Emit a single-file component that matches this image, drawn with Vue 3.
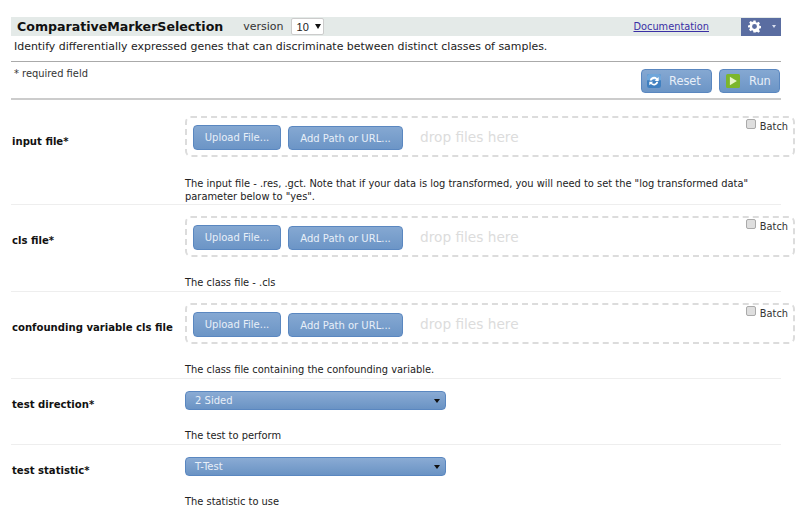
<script setup>
const fileParams = [
  { label: 'input file*', desc: 'The input file - .res, .gct. Note that if your data is log transformed, you will need to set the "log transformed data" parameter below to "yes".', tall: true },
  { label: 'cls file*', desc: 'The class file - .cls' },
  { label: 'confounding variable cls file', desc: 'The class file containing the confounding variable.' }
]
const selectParams = [
  { label: 'test direction*', value: '2 Sided', desc: 'The test to perform' },
  { label: 'test statistic*', value: 'T-Test', desc: 'The statistic to use' }
]
</script>

<template>
  <div class="page">
    <div class="head">
      <header class="titlebar">
        <span class="title">ComparativeMarkerSelection</span>
        <span class="version">version</span>
        <span class="vselect">10<i class="vcaret"></i></span>
        <a class="doc" href="#">Documentation</a>
        <span class="gear">
          <svg width="13" height="13" viewBox="0 0 24 24"><path fill="#fff" fill-rule="evenodd" d="M10 1h4l.6 3.200 2 .8 2.700-1.800 2.800 2.800-1.800 2.700.8 2 3.200.6v4l-3.200.6-.8 2 1.800 2.700-2.800 2.800-2.700-1.800-2 .8L14 23h-4l-.6-3.200-2-.8-2.700 1.800-2.800-2.800 1.800-2.700-.8-2L0 14v-4l3.200-.6.8-2L2.200 4.700 5 1.900l2.700 1.800 2-.8zM12 7.500a4.500 4.500 0 1 0 0 9 4.500 4.500 0 0 0 0-9z"/></svg>
          <i class="gcaret"></i>
        </span>
      </header>
      <p class="summary">Identify differentially expressed genes that can discriminate between distinct classes of samples.</p>
      <div class="actions">
        <span class="req">* required field</span>
        <div class="btns">
          <button class="btn act">
            <svg width="14" height="14" viewBox="0 0 18 18"><rect width="18" height="18" rx="3" fill="#3f7fc0"/><path d="M0 3a3 3 0 0 1 3-3h12a3 3 0 0 1 3 3v5H0z" fill="#6fa6da"/><path d="M3.500 8.500A5.500 5.500 0 0 1 13 5.500L15 4v5h-5l1.700-1.800A3.500 3.500 0 0 0 6 8.500zM14.500 10a5.500 5.500 0 0 1-9.500 3L3 14.500V10h5L6.300 11.700A3.500 3.500 0 0 0 12 10z" fill="#fff"/></svg>
            <span>Reset</span>
          </button>
          <button class="btn act run">
            <svg width="14" height="14" viewBox="0 0 18 18"><rect width="18" height="18" rx="2" fill="#7cb62c"/><path d="M5 3.500 14 9l-9 5.500z" fill="#e8f5c8"/></svg>
            <span>Run</span>
          </button>
        </div>
      </div>
    </div>

    <section v-for="p in fileParams" :key="p.label" class="row" :class="{ tall: p.tall }">
      <label class="lab">{{ p.label }}</label>
      <div class="field">
        <div class="drop">
          <button class="btn up">Upload File...</button>
          <button class="btn add">Add Path or URL...</button>
          <span class="hint">drop files here</span>
          <span class="batch"><i class="check"></i>Batch</span>
        </div>
        <p class="desc">{{ p.desc }}</p>
      </div>
    </section>

    <section v-for="p in selectParams" :key="p.label" class="row sel">
      <label class="lab">{{ p.label }}</label>
      <div class="field">
        <div class="select">{{ p.value }}<i class="scaret"></i></div>
        <p class="desc">{{ p.desc }}</p>
      </div>
    </section>
  </div>
</template>

<style>
html, body { margin: 0; background: #fff; overflow: hidden; }
</style>
<style scoped>
.page {
  width: 800px; height: 508px; padding: 17px 0 0 11px; box-sizing: border-box;
  font-family: "DejaVu Sans", Verdana, sans-serif; font-size: 10px; color: #222; overflow: hidden;
}
.head { width: 770px; }
.titlebar { display: flex; align-items: center; height: 19px; background: #e4eae8; }
.title { font-weight: bold; font-size: 12.600px; margin-left: 6px; color: #111; }
.version { margin-left: 20px; font-size: 11px; color: #333; }
.vselect {
  margin-left: 7px; width: 33px; height: 17px; box-sizing: border-box; border: 1px solid #ccc; border-radius: 2px;
  background: #fff; font-size: 11px; padding-left: 5px; display: flex; align-items: center; font-family: "Liberation Sans", sans-serif;
}
.vcaret { margin-left: 6px; border: 3.500px solid transparent; border-top: 5px solid #111; border-bottom: 0; }
.doc { margin-left: auto; margin-right: 32px; color: #3a2fa5; font-size: 9.800px; }
.gear { width: 40px; height: 18px; background: #5a6da1; display: flex; align-items: center; padding-left: 7px; box-sizing: border-box; }
.gcaret { margin-left: 11px; border: 2.500px solid transparent; border-top: 3px solid #d8deee; border-bottom: 0; }
.summary { margin: 4px 0 0 3px; font-size: 10.950px; line-height: 14px; height: 21px; }
.actions { display: flex; justify-content: space-between; height: 36px; border-top: 1px solid #aaa; border-bottom: 2px solid #ccc; }
.req { margin: 6px 0 0 3px; font-size: 9.900px; color: #333; }
.btns { display: flex; gap: 7px; margin-top: 7px; height: 24px; margin-right: 1px; }
.btn {
  border: 1px solid #5a87c0; border-radius: 4px; color: #e8eff8; font-family: inherit; font-size: 10px; padding: 0;
  background: linear-gradient(#85a8d2, #6c95c6);
}
.act { display: flex; align-items: center; gap: 8px; width: 71px; height: 24px; font-size: 11.400px; padding-left: 5px; box-sizing: border-box; }
.run { width: 61px; padding-left: 6px; gap: 9px; }
.row { display: flex; border-bottom: 1px solid #eee; height: 87px; box-sizing: border-box; width: 770px; }
.row.tall { height: 105px; padding-top: 16px; }
.lab { flex: 0 0 174px; font-weight: bold; font-size: 10.100px; color: #111; margin-top: 30px; padding-left: 1px; box-sizing: border-box; white-space: nowrap; }
.row.tall .lab { margin-top: 20px; }
.field { flex: 0 0 610px; margin-top: 11px; }
.row.tall .field { margin-top: 0; }
.drop {
  position: relative; height: 41px; width: 610px; box-sizing: border-box; border: 2px dashed #dcdcdc; border-radius: 6px;
  display: flex; align-items: center; padding-left: 6px; gap: 7px;
}
.up { width: 88px; height: 25px; align-self: flex-start; margin-top: 7px; }
.add { width: 115px; height: 24px; align-self: flex-start; margin-top: 8px; }
.hint { color: #dcdcdc; font-size: 13.700px; margin: 0 0 0 10px; }
.batch { position: absolute; right: 5px; top: 3px; display: flex; gap: 4px; font-size: 9.800px; color: #333; }
.check { width: 10px; height: 10px; margin-top: -2px; border: 1px solid #aaa; border-radius: 2px; background: #dedede; box-sizing: border-box; }
.desc { margin: 19px 0 0 0; font-size: 9.900px; line-height: 13px; color: #222; width: 600px; }
.row.tall .desc { margin-top: 20px; }
.row.sel { height: 66px; }
.row.sel .field { margin-top: 12px; }
.row.sel .lab { margin-top: 20px; }
.row.sel .desc { margin-top: 19px; }
.select {
  width: 261px; height: 19px; box-sizing: border-box; border: 1px solid #5a87c0; border-radius: 4px; color: #e8eff8; font-size: 10px;
  background: linear-gradient(#8aabd4, #6a93c4); display: flex; align-items: center; justify-content: space-between; padding: 0 5px 0 9px;
}
.scaret { border: 3.500px solid transparent; border-top: 4px solid #111; border-bottom: 0; }
</style>
